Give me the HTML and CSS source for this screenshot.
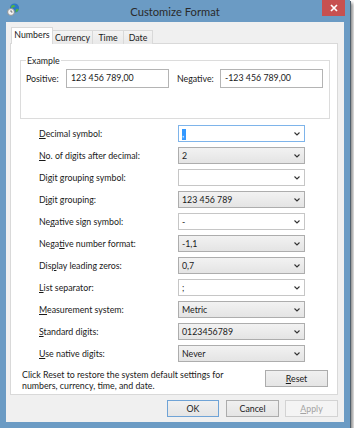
FILE: index.html
```html
<!DOCTYPE html>
<html>
<head>
<meta charset="utf-8">
<title>Customize Format</title>
<link rel="stylesheet" href="styles.css">
</head>
<body>
<div class="window">
  <div class="titlebar">
    <svg class="appicon" width="13" height="13" viewBox="0 0 13 13">
      <circle cx="7.5" cy="5" r="4.6" fill="#2b78c8"/>
      <path d="M5 2.2 C6.5 1.5 8 2 8.4 3.4 C7.6 4.2 6.6 3.6 6 4.6 C5.4 5.4 4.4 4.8 3.8 4.4 C3.9 3.4 4.3 2.7 5 2.2 Z" fill="#4fb04a"/>
      <path d="M9.2 6 C10.4 5.6 11.4 6 11.8 6.6 C11.2 8.2 10 9.2 8.8 9.4 C8.6 8.2 8.4 7 9.2 6 Z" fill="#4fb04a"/>
      <circle cx="4" cy="9" r="3.4" fill="#f4f4f4" stroke="#8a8a8a" stroke-width="0.9"/>
      <path d="M4 7.2 V9 H5.5" stroke="#555" stroke-width="0.8" fill="none"/>
    </svg>
    <div class="title">Customize Format</div>
    <div class="close">
      <svg width="8" height="8" viewBox="0 0 8 8"><path d="M1 1 L7 7 M7 1 L1 7" stroke="#fff" stroke-width="1.7"/></svg>
    </div>
  </div>
  <div class="client">
    <div class="tabs">
      <div class="tab active">Numbers</div>
      <div class="tab w-cur">Currency</div>
      <div class="tab w-time">Time</div>
      <div class="tab w-date">Date</div>
    </div>
    <div class="panel">
      <div class="group">
        <div class="legend">Example</div>
        <div class="example">
          <span class="ex-label">Positive:</span>
          <div class="textbox">123 456 789,00</div>
          <span class="ex-label neg">Negative:</span>
          <div class="textbox">-123 456 789,00</div>
        </div>
      </div>
      <div class="rows">
        <div class="row"><span class="label"><u>D</u>ecimal symbol:</span><div class="combo focus"><span class="val"><span class="sel">,</span></span><svg class="chev" width="6" height="4" viewBox="0 0 6 4"><path d="M0.5 0.5 L3 3 L5.5 0.5" stroke="#333" stroke-width="1.1" fill="none"/></svg></div></div>
        <div class="row"><span class="label"><u>N</u>o. of digits after decimal:</span><div class="combo list"><span class="val">2</span><svg class="chev" width="6" height="4" viewBox="0 0 6 4"><path d="M0.5 0.5 L3 3 L5.5 0.5" stroke="#333" stroke-width="1.1" fill="none"/></svg></div></div>
        <div class="row"><span class="label">Di<u>g</u>it grouping symbol:</span><div class="combo"><span class="val"></span><svg class="chev" width="6" height="4" viewBox="0 0 6 4"><path d="M0.5 0.5 L3 3 L5.5 0.5" stroke="#333" stroke-width="1.1" fill="none"/></svg></div></div>
        <div class="row"><span class="label">D<u>i</u>git grouping:</span><div class="combo list"><span class="val">123 456 789</span><svg class="chev" width="6" height="4" viewBox="0 0 6 4"><path d="M0.5 0.5 L3 3 L5.5 0.5" stroke="#333" stroke-width="1.1" fill="none"/></svg></div></div>
        <div class="row"><span class="label">Ne<u>g</u>ative sign symbol:</span><div class="combo"><span class="val">-</span><svg class="chev" width="6" height="4" viewBox="0 0 6 4"><path d="M0.5 0.5 L3 3 L5.5 0.5" stroke="#333" stroke-width="1.1" fill="none"/></svg></div></div>
        <div class="row"><span class="label">Nega<u>t</u>ive number format:</span><div class="combo list"><span class="val">-1,1</span><svg class="chev" width="6" height="4" viewBox="0 0 6 4"><path d="M0.5 0.5 L3 3 L5.5 0.5" stroke="#333" stroke-width="1.1" fill="none"/></svg></div></div>
        <div class="row"><span class="label">Dis<u>p</u>lay leading zeros:</span><div class="combo list"><span class="val">0,7</span><svg class="chev" width="6" height="4" viewBox="0 0 6 4"><path d="M0.5 0.5 L3 3 L5.5 0.5" stroke="#333" stroke-width="1.1" fill="none"/></svg></div></div>
        <div class="row"><span class="label"><u>L</u>ist separator:</span><div class="combo"><span class="val">;</span><svg class="chev" width="6" height="4" viewBox="0 0 6 4"><path d="M0.5 0.5 L3 3 L5.5 0.5" stroke="#333" stroke-width="1.1" fill="none"/></svg></div></div>
        <div class="row"><span class="label"><u>M</u>easurement system:</span><div class="combo list"><span class="val">Metric</span><svg class="chev" width="6" height="4" viewBox="0 0 6 4"><path d="M0.5 0.5 L3 3 L5.5 0.5" stroke="#333" stroke-width="1.1" fill="none"/></svg></div></div>
        <div class="row"><span class="label"><u>S</u>tandard digits:</span><div class="combo list"><span class="val">0123456789</span><svg class="chev" width="6" height="4" viewBox="0 0 6 4"><path d="M0.5 0.5 L3 3 L5.5 0.5" stroke="#333" stroke-width="1.1" fill="none"/></svg></div></div>
        <div class="row"><span class="label"><u>U</u>se native digits:</span><div class="combo list"><span class="val">Never</span><svg class="chev" width="6" height="4" viewBox="0 0 6 4"><path d="M0.5 0.5 L3 3 L5.5 0.5" stroke="#333" stroke-width="1.1" fill="none"/></svg></div></div>
      </div>
      <div class="footer">
        <p class="note">Click Reset to restore the system default settings for<br>numbers, currency, time, and date.</p>
        <div class="btn reset"><span><u>R</u>eset</span></div>
      </div>
    </div>
    <div class="buttons">
      <div class="btn ok">OK</div>
      <div class="btn cancel">Cancel</div>
      <div class="btn apply"><span><u>A</u>pply</span></div>
    </div>
  </div>
</div>
</body>
</html>
```
FILE: styles.css
```css
* { box-sizing: border-box; }
body {
  margin: 0;
  background: #fff;
  font-family: "Lato", "Noto Sans", sans-serif;
  font-size: 8.8px;
  color: #1a1a1a;
}
u { text-decoration-thickness: 1px; text-underline-offset: 1px; }
.window {
  width: 350px;
  height: 428px;
  background: #6b9bc4;
  padding: 0 6px 6px;
  box-shadow: 1px 1px 0 #4f5f6c, 3px 3px 3px rgba(0,0,0,0.45);
}
.titlebar {
  height: 22px;
  display: grid;
  grid-template-columns: 1fr auto 1fr;
  align-items: start;
}
.appicon { margin: 3px 0 0 1px; }
.title {
  font-size: 11.2px;
  color: #2a2a2a;
  line-height: 24px;
}
.close {
  justify-self: end;
  margin-right: -1px;
  width: 23px;
  height: 16px;
  background: #c75050;
  display: flex;
  align-items: center;
  justify-content: center;
}
.client {
  height: 400px;
  background: #f0f0f0;
  padding-top: 5px;
}
.tabs {
  display: flex;
  align-items: flex-end;
  height: 17px;
  margin-left: 5px;
}
.tab {
  height: 14px;
  border: 1px solid #d9d9d9;
  border-left: none;
  border-bottom: none;
  background: linear-gradient(#f3f3f3, #e9e9e9);
  display: flex;
  align-items: center;
  justify-content: center;
  line-height: 1;
  padding-top: 1px;
  white-space: nowrap;
}
.tab.active {
  width: 42px;
  height: 17px;
  border-left: 1px solid #d9d9d9;
  background: #fff;
  position: relative;
  z-index: 1;
  padding-top: 0;
  padding-bottom: 2px;
}
.w-cur { width: 40px; }
.w-time { width: 31px; }
.w-date { width: 29px; }
.panel {
  margin: -1px 0 0 4px;
  width: 328px;
  height: 352px;
  border: 1px solid #d9d9d9;
  background: #fff;
}
.group {
  margin: 16px 0 0 9px;
  width: 310px;
  height: 59px;
  border: 1px solid #dcdcdc;
}
.legend {
  display: block;
  width: max-content;
  margin: -7px 0 0 5px;
  line-height: 13px;
  padding: 0 1px;
  background: #fff;
}
.example {
  display: flex;
  align-items: center;
  margin-top: 2px;
}
.ex-label { margin-left: 5px; width: 40px; }
.ex-label.neg { margin-left: 8px; width: 43px; }
.textbox {
  width: 103px;
  height: 19px;
  border: 1px solid #b4b4b4;
  padding: 2px 0 0 4px;
  line-height: 12px;
}
.rows {
  margin: 6px 0 0 28px;
  display: flex;
  flex-direction: column;
  gap: 5px;
}
.row {
  display: flex;
  align-items: center;
  height: 17px;
}
.label { width: 139px; }
.combo {
  width: 127px;
  height: 17px;
  border: 1px solid #c6c6c6;
  background: #fff;
  display: flex;
  align-items: center;
  padding: 0 4px 0 3px;
}
.combo .val { flex: 1; }
.combo.list {
  background: linear-gradient(#f2f2f2, #e4e4e4);
  border-color: #adadad;
}
.combo.focus { border-color: #7eb4ea; }
.sel {
  display: inline-block;
  width: 4px;
  height: 11px;
  line-height: 10px;
  background: #3399ff;
  color: #fff;
  vertical-align: middle;
}
.footer {
  display: flex;
  margin-top: 7px;
}
.note {
  margin: 0 0 0 11px;
  line-height: 11px;
  white-space: nowrap;
}
.btn {
  height: 17px;
  border: 1px solid #acacac;
  background: linear-gradient(#f0f0f0, #e5e5e5);
  display: flex;
  align-items: center;
  justify-content: center;
}
.reset { margin: 1px 9px 0 auto; width: 63px; flex: none; }
.buttons {
  display: flex;
  justify-content: flex-end;
  margin-top: 5px;
  padding-right: 6px;
}
.ok { width: 52px; border-color: #6fa3d6; }
.cancel { width: 53px; margin-left: 7px; }
.apply {
  width: 53px;
  margin-left: 6px;
  color: #a3a3a3;
  border-color: #d3d3d3;
  background: #f4f4f4;
}
```
